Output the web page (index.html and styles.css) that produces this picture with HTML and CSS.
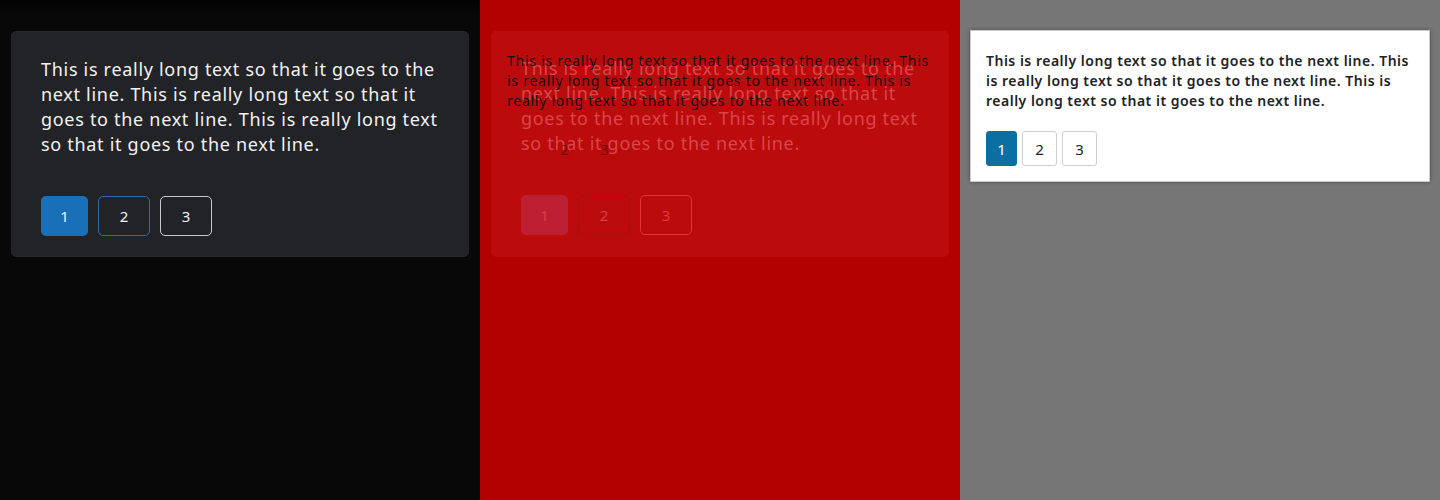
FILE: index.html
```html
<!DOCTYPE html>
<html lang="en">
<head>
<meta charset="utf-8">
<title>Pagination comparison</title>
<link rel="stylesheet" href="styles.css">
</head>
<body>
<div class="panels">
  <section class="pane pane-dark">
    <div class="card card-dark">
      <p class="text-dark">This is really long text so that it goes to the next line. This is really long text so that it goes to the next line. This is really long text so that it goes to the next line.</p>
      <div class="pager pager-dark">
        <span class="pg pg-d1">1</span>
        <span class="pg pg-d2">2</span>
        <span class="pg pg-d3">3</span>
      </div>
    </div>
  </section>

  <section class="pane pane-diff">
    <div class="card card-diff">
      <div class="layer layer-a">
        <p class="text-dark text-diff">This is really long text so that it goes to the next line. This is really long text so that it goes to the next line. This is really long text so that it goes to the next line.</p>
        <div class="pager pager-dark">
          <span class="pg pg-x1">1</span>
          <span class="pg pg-x2">2</span>
          <span class="pg pg-x3">3</span>
        </div>
      </div>
      <div class="layer layer-b">
        <p class="text-ghost">This is really long text so that it goes to the next line. This<br>is really long text so that it goes to the next line. This is<br>really long text so that it goes to the next line.</p>
        <div class="pager pager-light">
          <span class="pl pl-ghost"></span>
          <span class="pl pl-ghost">2</span>
          <span class="pl pl-ghost">3</span>
        </div>
      </div>
    </div>
  </section>

  <section class="pane pane-light">
    <div class="card card-light">
      <p class="text-light">This is really long text so that it goes to the next line. This is really long text so that it goes to the next line. This is really long text so that it goes to the next line.</p>
      <div class="pager pager-light">
        <span class="pl pl-1">1</span>
        <span class="pl pl-2">2</span>
        <span class="pl pl-3">3</span>
      </div>
    </div>
  </section>
</div>
</body>
</html>
```

FILE: styles.css
```css
* { box-sizing: border-box; }
html, body { margin: 0; padding: 0; }
body {
  font-family: "Noto Sans", "Liberation Sans", sans-serif;
  width: 1440px;
  height: 500px;
  overflow: hidden;
}
p { margin: 0; }

.panels {
  display: grid;
  grid-template-columns: 480px 480px 480px;
  height: 500px;
}

.pane { height: 500px; }

/* ---------- dark ---------- */
.pane-dark {
  background: linear-gradient(#030303 0, #080808 14px, #080808 100%);
  padding: 31px 11px;
}
.card {
  display: flex;
  flex-direction: column;
}
.card-dark {
  height: 226px;
  background: #222327;
  border: 1px solid #26272b;
  border-radius: 5px;
  padding: 25px 28px 19px 29px;
}
.text-dark {
  font-size: 18px;
  line-height: 25px;
  letter-spacing: 0.7px;
  color: #f2f2f2;
}
.pager {
  display: flex;
}
.pager-dark {
  gap: 10px;
  margin-top: 39px;
}
.pg {
  display: flex;
  align-items: center;
  justify-content: center;
  height: 40px;
  width: 52px;
  border-radius: 5px;
  font-size: 15px;
  color: #f2f2f2;
  border: 1px solid transparent;
}
.pg-d1 { width: 47px; background: #1a6fb9; }
.pg-d2 { border-color: #2d6eae; }
.pg-d3 { border-color: #c9c9c9; }

/* ---------- diff ---------- */
.pane-diff {
  background: #b30000;
  padding: 31px 11px;
}
.card-diff {
  height: 226px;
  background: #bb0b0c;
  border-radius: 5px;
  display: grid;
}
.layer {
  grid-area: 1 / 1;
  display: flex;
  flex-direction: column;
}
.layer-a { padding: 25px 28px 19px 30px; }
.layer-b { padding: 20px 12px 15px 16px; }
.text-diff { color: #d9464a; }
.pg-x1 { width: 47px; background: #bd2032; color: #d8404a; }
.pg-x2 { border-color: #a50f1c; color: #d44048; }
.pg-x3 { border-color: #e03436; color: #e03a3e; }
.text-ghost {
  font-size: 14px;
  line-height: 20px;
  white-space: nowrap;
  letter-spacing: 0.75px;
  color: #111;
}
.layer-b .pager-light { margin-top: 20px; }
.pl-ghost {
  border-color: transparent !important;
  color: #3a0606 !important;
  opacity: 0.55;
}

/* ---------- light ---------- */
.pane-light {
  background: #767676;
  padding: 30px 10px;
}
.card-light {
  height: 152px;
  background: #ffffff;
  border: 1px solid #c9c9c9;
  box-shadow: 0 0 4px rgba(0, 0, 0, 0.35);
  padding: 20px 10px 15px 15px;
}
.text-light {
  font-size: 14px;
  line-height: 20px;
  font-weight: 600;
  letter-spacing: 0.5px;
  color: #222222;
}
.pager-light {
  gap: 5px;
  margin-top: 20px;
}
.pl {
  display: flex;
  align-items: center;
  justify-content: center;
  width: 35px;
  height: 35px;
  border: 1px solid #cfcfcf;
  border-radius: 3px;
  font-size: 15px;
  color: #222;
}
.pl-1 {
  width: 31px;
  background: #0b70a1;
  border-color: #0b70a1;
  color: #fff;
}
```
